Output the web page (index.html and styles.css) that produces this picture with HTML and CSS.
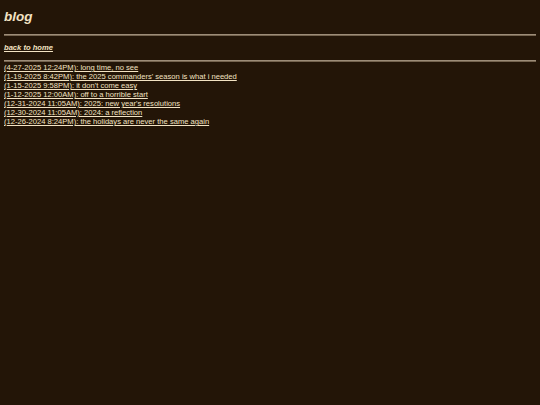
FILE: index.html
```html
<!DOCTYPE html>
<html lang="en">
<head>
	<meta charset="UTF-8">
	<title>blog</title>
	<link rel="stylesheet" href="styles.css">
</head>
<body>
	<h1 class="title">blog</h1>
	<hr class="rule">
	<p class="back"><a href="#">back to home</a></p>
	<hr class="rule">
	<div class="posts">
		<a href="#">(4-27-2025 12:24PM): long time, no see</a><br>
		<a href="#">(1-19-2025 8:42PM): the 2025 commanders' season is what i needed</a><br>
		<a href="#">(1-15-2025 9:58PM): it don't come easy</a><br>
		<a href="#">(1-12-2025 12:00AM): off to a horrible start</a><br>
		<a href="#">(12-31-2024 11:05AM): 2025: new year's resolutions</a><br>
		<a href="#">(12-30-2024 11:05AM): 2024: a reflection</a><br>
		<a href="#">(12-26-2024 8:24PM): the holidays are never the same again</a>
	</div>
</body>
</html>
```

FILE: styles.css
```css
html{
	background: #231507;
}
body{
	margin: 0;
	padding: 4px;
	font-family: "Liberation Sans", Arial, sans-serif;
	font-size: 7.6px;
	line-height: 9px;
	color: #f3e3c3;
}
a{
	color: #f3e3c3;
}
.title{
	font-size: 13.5px;
	font-style: italic;
	line-height: normal;
	margin: 4.5px 0 10px;
}
.rule{
	height: 0;
	margin: 0;
	border: 0;
	border-top: 1px solid #9c8c78;
	border-bottom: 1px solid #75644f;
}
.back{
	margin: 7.5px 0 7.5px;
	font-weight: bold;
	font-style: italic;
}
.posts{
	margin-top: 1.5px;
}
```
